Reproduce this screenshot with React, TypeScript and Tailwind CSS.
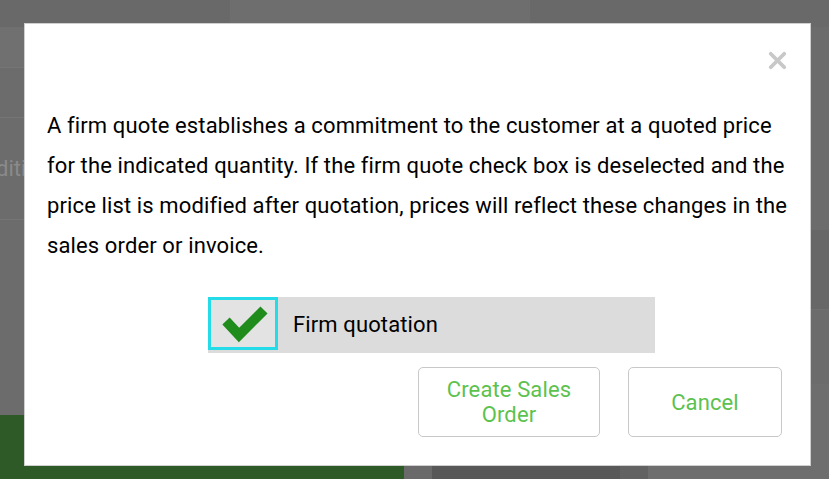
import { X } from "lucide-react";

function BackgroundPage() {
  // dimmed page behind the dialog
  return (
    <div className="w-[829px] h-[479px] bg-[#6c6c6c] flex flex-col overflow-hidden">
      <div className="h-[27px] bg-[#696969] flex">
        <div className="w-[230px]" />
        <div className="w-[300px] bg-[#6e6e6e]" />
      </div>
      <div className="flex flex-1">
        <div className="w-[404px] flex flex-col">
          <div className="h-[41px] bg-[#707070] border-b border-[#757575]" />
          <div className="h-[50px] border-b border-[#757575]" />
          <div className="h-[102px] border-b border-[#757575] flex items-center">
            <div className="w-[24px] overflow-hidden">
              <span className="block -ml-[4px] text-[22px] text-[#8a8a8a] whitespace-nowrap">dition</span>
            </div>
          </div>
          <div className="flex-1" />
          <div className="h-[64px] bg-[#2e5a27]" />
        </div>
        <div className="flex-1 flex flex-col">
          <div className="h-[203px]" />
          <div className="h-[80px] bg-[#676767] border-b border-[#6f6f6f]" />
          <div className="h-[75px] border-b border-[#6f6f6f]" />
          <div className="flex-1 flex">
            <div className="w-[28px] bg-[#6a6a6a]" />
            <div className="w-[188px] bg-[#585858]" />
            <div className="w-[28px] bg-[#626262]" />
            <div className="flex-1 bg-[#6e6e6e]" />
          </div>
        </div>
      </div>
    </div>
  );
}

export default function App() {
  return (
    <div className="relative w-[829px] h-[479px] font-['Roboto',sans-serif]">
      <BackgroundPage />

      <div className="absolute left-[24px] top-[23px] w-[787px] h-[443px] bg-white border border-[#cfcfcf] flex flex-col">
        <div className="flex justify-end pt-[23px] pr-[19px]">
          <button className="text-[#c8c8c8]">
            <X size={27} strokeWidth={3.4} />
          </button>
        </div>

        <p className="mt-[32px] pl-[22px] text-[22px] tracking-[0.12px] leading-[40px] text-black whitespace-nowrap">
          A firm quote establishes a commitment to the customer at a quoted price
          <br />
          for the indicated quantity. If the firm quote check box is deselected and the
          <br />
          price list is modified after quotation, prices will reflect these changes in the
          <br />
          sales order or invoice.
        </p>

        <div className="mt-[31px] ml-[183px] w-[447px] h-[56px] bg-[#dcdcdc] flex items-start">
          <div className="w-[70px] h-[53px] border-[3px] border-[#25dbe8] bg-[#e3e3e3] flex items-center justify-center">
            <svg width="64" height="47" viewBox="0 0 64 47">
              <polyline
                points="15,21 28,35 53,10"
                fill="none"
                stroke="#1f8c1c"
                strokeWidth="10"
                strokeLinejoin="miter"
              />
            </svg>
          </div>
          <span className="ml-[15px] h-[55px] flex items-center text-[22px] tracking-[0.12px] text-black">Firm quotation</span>
        </div>

        <div className="mt-[14px] pr-[28px] flex justify-end gap-[28px]">
          <button className="w-[182px] h-[70px] border border-[#c8c8c8] rounded-[5px] text-[22px] leading-[25px] tracking-[0.12px] text-[#5cc24e]">
            Create Sales
            <br />
            Order
          </button>
          <button className="w-[154px] h-[70px] border border-[#c8c8c8] rounded-[5px] text-[22px] tracking-[0.12px] text-[#5cc24e]">
            Cancel
          </button>
        </div>
      </div>
    </div>
  );
}
